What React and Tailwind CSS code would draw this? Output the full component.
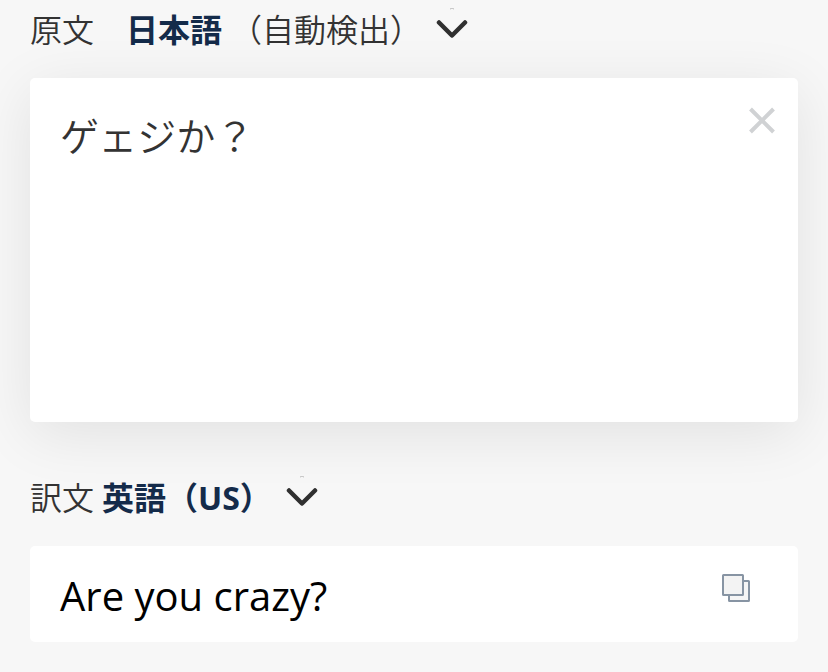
import { useState } from "react";

function Chevron() {
  return (
    <svg className="h-9 w-8 shrink-0" viewBox="0 0 32 36" fill="none" aria-hidden="true">
      <path d="M14 3L15.500 2.500H16.500L18 3" stroke="#b9b9b9" strokeWidth="1" />
      <path d="M3 16.500L16 29.500L29 16.500" stroke="#303030" strokeWidth="4.500" strokeLinecap="round" strokeLinejoin="round" />
    </svg>
  );
}

function CloseIcon() {
  return (
    <svg className="size-7" viewBox="0 0 28 28" fill="none" aria-hidden="true">
      <path d="M2.500 3L25.500 26M25.500 3L2.500 26" stroke="#d0d2d4" strokeWidth="4" />
    </svg>
  );
}

function CopyIcon() {
  return (
    <svg className="size-7" viewBox="0 0 28 28" aria-hidden="true">
      <rect x="7" y="7" width="20" height="20" rx="0.500" fill="#f5f5f5" stroke="#8794a3" strokeWidth="2" />
      <rect x="1" y="1" width="20" height="20" rx="0.500" fill="#f3f3f3" stroke="#8794a3" strokeWidth="2" />
    </svg>
  );
}

export default function App() {
  const [text, setText] = useState("ゲェジか？");

  return (
    <main lang="ja" className="min-h-screen bg-[#f7f7f7] px-[30px] pb-[30px] font-['Open_Sans','Noto_Sans_CJK_JP',sans-serif] text-[#333]">
      <section className="flex flex-col">
        <header className="flex h-[78px] items-start pt-1.5 text-[32px] leading-12 font-[350]">
          <label htmlFor="source" className="mr-8 whitespace-nowrap">原文</label>
          <button type="button" aria-haspopup="listbox" className="flex items-start whitespace-nowrap">
            <strong className="mr-2 font-bold text-[#142b4a]">日本語</strong>
            <span className="mr-[14px]">（自動検出）</span>
            <Chevron />
          </button>
        </header>
        <div className="flex h-[344px] items-start rounded-[5px] bg-white pt-7 pr-[22px] pl-[30px] shadow-[0_12px_60px_rgba(0,0,0,0.09)]">
          <textarea
            id="source"
            value={text}
            onChange={(e) => setText(e.target.value)}
            className="h-72 min-w-0 flex-1 resize-none text-[39px] leading-[60px] font-[350] outline-none"
          />
          <button type="button" aria-label="クリア" onClick={() => setText("")}>
            <CloseIcon />
          </button>
        </div>
      </section>

      <section className="flex flex-col">
        <header className="flex h-[124px] items-start pt-[52px] text-[32px] leading-12 font-[350]">
          <span className="mr-2 whitespace-nowrap">訳文</span>
          <button type="button" aria-haspopup="listbox" className="flex items-start whitespace-nowrap">
            <strong className="mr-[14px] font-bold text-[#142b4a]">英語（US）</strong>
            <Chevron />
          </button>
        </header>
        <div className="flex h-24 items-start justify-between rounded-[5px] bg-white pt-5 pr-12 pl-[30px]">
          <output lang="en" htmlFor="source" className="text-[40px] leading-[60px] text-black">Are you crazy?</output>
          <button type="button" aria-label="コピー" className="mt-2">
            <CopyIcon />
          </button>
        </div>
      </section>
    </main>
  );
}
